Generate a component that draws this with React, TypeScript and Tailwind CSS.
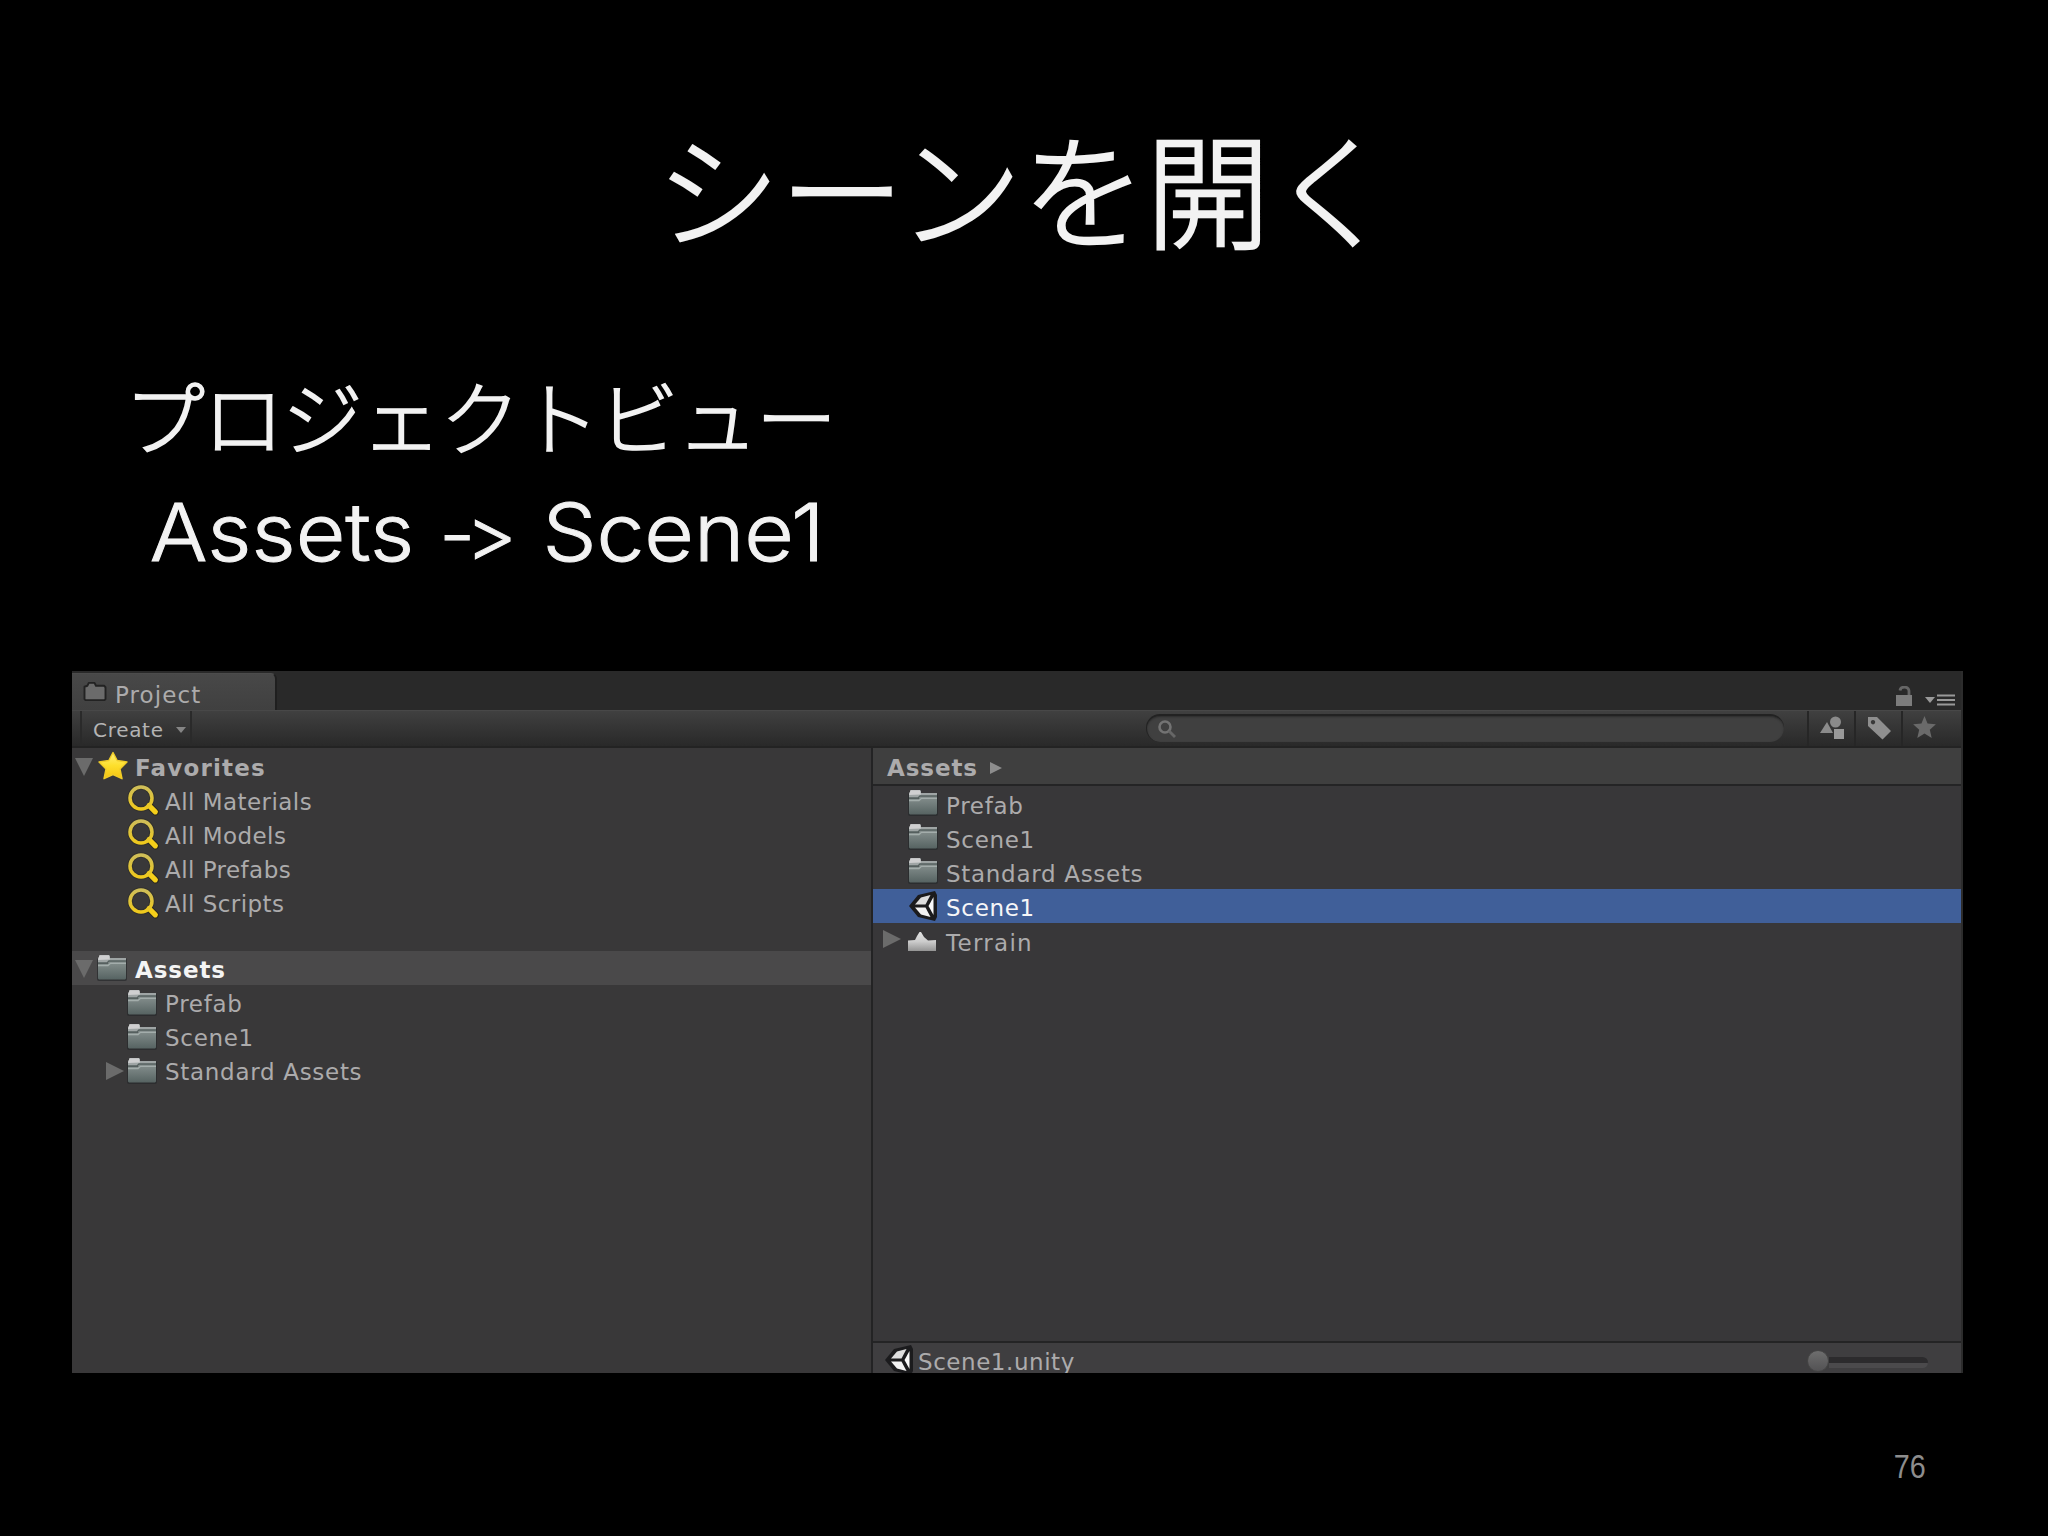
import React from "react";

const ui = "font-['DejaVu_Sans',sans-serif]";

function Folder({ className = "" }: { className?: string }) {
  return (
    <svg viewBox="0 0 32 28" className={`h-[28px] w-[32px] shrink-0 ${className}`}>
      <defs>
        <linearGradient id="folderBody" x1="0" y1="0" x2="0" y2="1">
          <stop offset="0" stopColor="#87918f" />
          <stop offset="1" stopColor="#566362" />
        </linearGradient>
      </defs>
      <rect x="1" y="4" width="30" height="23" rx="2" fill="#262a2b" opacity="0.7" />
      <path d="M2 7V4l1-1V2l1-1h9l1 1v2h16v5H2z" fill="#9fa5a5" />
      <path d="M2 6L3.500 1.200H13l1 4.300z" fill="#cfcfd0" />
      <path d="M2 9.500h10l2-2.500h16v17.500l-1 1H3l-1-1z" fill="url(#folderBody)" />
      <path d="M2 9h9l2-2h17" fill="none" stroke="#55605f" strokeWidth="1.300" />
      <path d="M2 11.500h10l2.500-2.200H30" fill="none" stroke="#a3adab" strokeWidth="1.300" />
    </svg>
  );
}

function Magnifier() {
  return (
    <svg viewBox="0 0 32 32" className="h-[32px] w-[32px] shrink-0">
      <defs>
        <linearGradient id="lens" x1="0" y1="0" x2="0" y2="1">
          <stop offset="0" stopColor="#cfbe58" />
          <stop offset="1" stopColor="#efc91d" />
        </linearGradient>
      </defs>
      <path d="M23 22.500l5.500 5.500" stroke="#2c2a20" strokeWidth="7" strokeLinecap="round" />
      <circle cx="14" cy="14" r="11" fill="none" stroke="#2c2a20" strokeWidth="5.500" opacity="0.5" />
      <path d="M22 21.500l6.300 6.300" stroke="#f5cf1a" strokeWidth="5.200" strokeLinecap="round" />
      <circle cx="14" cy="14" r="11" fill="none" stroke="url(#lens)" strokeWidth="3.500" />
    </svg>
  );
}

function Star() {
  return (
    <svg viewBox="0 0 30 29" className="ml-[5px] h-[29px] w-[30px] shrink-0">
      <defs>
        <linearGradient id="star" x1="0" y1="0" x2="0" y2="1">
          <stop offset="0" stopColor="#fff07a" />
          <stop offset="0.500" stopColor="#fddf2c" />
          <stop offset="1" stopColor="#f5c310" />
        </linearGradient>
      </defs>
      <path
        d="M15 1.500l4.200 8 9.800 1.500-7 7 2 9.700L15 23.500l-9 4.200 2-9.700-7-7 9.800-1.500z"
        fill="url(#star)"
        stroke="#f0cc28"
        strokeWidth="1.400"
        strokeLinejoin="round"
      />
    </svg>
  );
}

function UnityMark() {
  return (
    <svg viewBox="0 0 30 30" className="h-[30px] w-[30px] shrink-0">
      <path d="M1 15L10 4 27 0l2 4v22l-2 4-17-4z" fill="#1b1b1d" />
      <path d="M7 13.500L13 6.500l9.500-2.500-5 9.500z" fill="#dedede" />
      <path d="M7 16.500l6 7 9.500 2.500-5-9.500z" fill="#f2f2f2" />
      <path d="M25.500 6v18l-5-9z" fill="#fafafa" />
    </svg>
  );
}

function TerrainIcon() {
  return (
    <svg viewBox="0 0 30 22" className="h-[22px] w-[30px] shrink-0">
      <defs>
        <linearGradient id="terrain" x1="0" y1="0" x2="0" y2="1">
          <stop offset="0" stopColor="#e2e2e2" />
          <stop offset="0.500" stopColor="#cccccc" />
          <stop offset="1" stopColor="#949494" />
        </linearGradient>
      </defs>
      <path d="M1 21V10.500L8 10l2-4 2.500-4h1.500l3 5 4 3.500 8-.5V21z" fill="url(#terrain)" />
    </svg>
  );
}

function Arrow({ down = false, className = "" }: { down?: boolean; className?: string }) {
  return (
    <svg viewBox="0 0 18 18" className={`size-[18px] shrink-0 ${className}`}>
      <path d={down ? "M0 0h18L9 18z" : "M0 0l18 9L0 18z"} fill="#6b6b6b" />
    </svg>
  );
}

function Label({
  children,
  spacing = "tracking-[0.700px]",
  pad = "pt-[4px]",
  tone = "text-[#acabac]",
  className = "",
}: {
  children: React.ReactNode;
  spacing?: string;
  pad?: string;
  tone?: string;
  className?: string;
}) {
  return <span className={`whitespace-pre text-[23px] leading-[32px] ${spacing} ${pad} ${tone} ${className}`}>{children}</span>;
}

function Tree() {
  return (
    <div className="flex w-[799px] shrink-0 flex-col bg-[#393839]">
      <div className="flex h-[35px] items-center pl-[3px]">
        <Arrow down className="mt-[2px]" />
        <Star />
        <Label className="pl-[7px] font-bold" spacing="tracking-[1.200px]">Favorites</Label>
      </div>
      {["All Materials", "All Models", "All Prefabs", "All Scripts"].map((name) => (
        <div key={name} className="flex h-[34.200px] items-center pl-[55px]">
          <Magnifier />
          <Label className="pl-[6px]" spacing="tracking-[0.450px]" pad="pt-[3px]">{name}</Label>
        </div>
      ))}
      <div className="mt-[31px] flex h-[34.200px] items-center bg-[#4a494a] pl-[3px]">
        <Arrow down className="mt-[2px]" />
        <Folder className="ml-[3px]" />
        <Label className="pl-[7px] font-bold" tone="text-[#f4f4f4]" spacing="tracking-[0.900px]">Assets</Label>
      </div>
      {["Prefab", "Scene1", "Standard Assets"].map((name) => (
        <div key={name} className="flex h-[34.200px] items-center pl-[34px]">
          <Arrow className={name === "Standard Assets" ? "mt-[2px]" : "invisible"} />
          <Folder className="ml-[2px] mt-[1px]" />
          <Label className="pl-[7px]">{name}</Label>
        </div>
      ))}
    </div>
  );
}

function Files() {
  return (
    <div className="flex min-w-0 flex-1 flex-col border-l-[2px] border-[#232324] bg-[#383739]">
      <div className="flex h-[38px] shrink-0 items-center border-b-[2px] border-[#242425] bg-[#3f3f3f] pl-[14px]">
        <Label className="font-bold" pad="pt-[3px]" spacing="tracking-[0.900px]">Assets</Label>
        <svg viewBox="0 0 12 12" className="ml-[12px] mt-[3px] size-[12px]">
          <path d="M0 0l12 6-12 6z" fill="#8d8d8d" />
        </svg>
      </div>
      {["Prefab", "Scene1", "Standard Assets"].map((name) => (
        <div key={name} className="flex h-[34.200px] shrink-0 items-center pl-[34px]">
          <Folder />
          <Label className="pl-[7px]" pad="pt-[5px]">{name}</Label>
        </div>
      ))}
      <div className="flex h-[34.200px] shrink-0 items-center bg-[#405f99] pl-[35px]">
        <UnityMark />
        <Label className="pl-[8px]" pad="pt-[5px]" tone="text-[#f6f6f8]">Scene1</Label>
      </div>
      <div className="flex h-[34.200px] shrink-0 items-center pl-[10px]">
        <Arrow className="-mt-[2px]" />
        <span className="ml-[6px] mt-[3px] flex">
          <TerrainIcon />
        </span>
        <Label className="pl-[9px]" pad="pt-[6px]" spacing="tracking-[1.300px]">Terrain</Label>
      </div>
      <div className="mt-auto flex h-[32px] shrink-0 items-center border-t-[2px] border-[#242425] bg-[#3f3e40] pl-[11px] pr-[33px]">
        <span className="mt-[4px] flex">
          <UnityMark />
        </span>
        <Label className="pl-[4px]" pad="pt-[8px]" spacing="tracking-[0.550px]">Scene1.unity</Label>
        <div className="ml-auto mt-[5px] flex items-center">
          <span className="size-[22px] rounded-full border border-[#444] bg-linear-to-b from-[#6e6e6e] to-[#535254]" />
          <span className="mt-[3px] h-[11px] w-[99px] rounded-r-full border-b-[5px] border-[#4b4a4c] bg-[#2c2b2d]" />
        </div>
      </div>
    </div>
  );
}

function TabBar() {
  return (
    <div className="flex h-[38.500px] shrink-0 items-end bg-[#292929]">
      <div className="flex h-[37px] w-[205px] items-center rounded-tr-[6px] border-r-[2px] border-t border-[#4c4c4c] border-r-[#1f1f1f] bg-linear-to-b from-[#484848] to-[#404040] pl-[10px]">
        <svg viewBox="0 0 26 22" className="-mt-[1px] h-[21px] w-[26px]">
          <path
            d="M2 19V6l3-1 1.500-3h6L14 5h8.500L24 6.500V19l-1 1H3z"
            fill="#6b6b6b"
            stroke="#222"
            strokeWidth="2"
            strokeLinejoin="round"
          />
        </svg>
        <Label className="pl-[7px]" pad="pt-[6px]" spacing="tracking-[1.100px]">Project</Label>
      </div>
      <div className="ml-auto flex h-full items-end pb-[4px] pr-[6px]">
        <svg viewBox="0 0 16 20" className="h-[20px] w-[16px]">
          <path d="M4 4.500C4.500 0 12.500 0 13 5v5" fill="none" stroke="#666" strokeWidth="2.800" />
          <rect x="0" y="9" width="16" height="11" fill="#7c7c7c" />
        </svg>
        <svg viewBox="0 0 30 12" className="ml-[13px] h-[12px] w-[30px]">
          <path d="M0 3h10L5 9z" fill="#999" />
          <path d="M12 1.500h18M12 6h18M12 10.500h18" stroke="#999" strokeWidth="2.200" />
        </svg>
      </div>
    </div>
  );
}

function ToolBar() {
  return (
    <div className="flex h-[38.500px] shrink-0 items-stretch border-b-[2px] border-t border-b-[#232323] border-t-[#484848] bg-linear-to-b from-[#404040] to-[#292929]">
      <div className="ml-[8px] flex w-[112px] items-center border-x-[2px] border-[#2a2a2a] pl-[11px]">
        <span className="pt-[3px] text-[20px] leading-[28px] tracking-[0.700px] text-[#b4b4b4]">Create</span>
        <svg viewBox="0 0 10 6" className="ml-[12px] mt-[3px] h-[6px] w-[10px]">
          <path d="M0 0h10L5 6z" fill="#858585" />
        </svg>
      </div>
      <div className="ml-auto mr-[23px] mt-[3px] flex h-[28px] w-[638px] items-center rounded-full border-t-[2px] border-l border-[#222] bg-[#404040] pl-[11px] shadow-[inset_0_1px_2px_#2c2c2c]">
        <svg viewBox="0 0 18 18" className="size-[18px]">
          <circle cx="7" cy="7" r="5.500" fill="none" stroke="#737373" strokeWidth="2.600" />
          <path d="M11 11l6 6" stroke="#666" strokeWidth="2.800" />
        </svg>
      </div>
      <div className="flex w-[47px] items-center justify-center border-l-[2px] border-[#262626]">
        <svg viewBox="0 0 24 24" className="size-[24px]">
          <path d="M0 17L7 6l6 11z" fill="#8b8b8b" />
          <circle cx="15.500" cy="6" r="5.500" fill="#8b8b8b" />
          <rect x="14" y="13" width="10" height="10" fill="#9a9a9a" />
        </svg>
      </div>
      <div className="flex w-[47px] items-center justify-center border-l-[2px] border-[#262626]">
        <svg viewBox="0 0 24 24" className="size-[24px]">
          <path fillRule="evenodd" d="M1 1h9l14 14-8.500 8.500L1 10zM6 4a2.200 2.200 0 1 0 .01 0z" fill="#8f8f8f" />
        </svg>
      </div>
      <div className="flex w-[60px] items-center border-l-[2px] border-[#262626] pl-[10px]">
        <svg viewBox="0 0 30 29" className="-mt-[2px] h-[22px] w-[23px]">
          <path d="M15 0l4 10 11 1-8 7 2.500 11L15 23l-9.500 6L8 18l-8-7 11-1z" fill="#6a6a6a" />
        </svg>
      </div>
    </div>
  );
}

export default function App() {
  return (
    <main className="flex h-[1536px] w-[2048px] flex-col overflow-hidden bg-black font-['Noto_Sans_CJK_JP',sans-serif] text-[#f2f2f2]">
      <h1 className="mt-[97px] flex h-[176px] items-center justify-center whitespace-nowrap pl-[2px] text-[124px] font-light leading-[176px] [-webkit-text-stroke:2.400px_#f2f2f2]">
        シーンを開く
      </h1>
      <div className="mt-[83px] flex h-[315px] flex-col pl-[124px] text-[81px] font-light leading-[115px] [-webkit-text-stroke:1.600px_#f2f2f2]">
        <p className="whitespace-nowrap tracking-[-2px]">プロジェクトビュー</p>
        <p className="origin-left scale-x-[1.07] self-start whitespace-pre pl-[24px] pt-[3px] font-['Inter',sans-serif] text-[80px] [-webkit-text-stroke:1px_#f2f2f2] [font-feature-settings:'calt'_0]">
          <span>Assets </span>
          <span className="mx-[1px] text-[74px]">
            <span className="tracking-[-9px]">-</span>&gt;
          </span>
          <span> Scene1</span>
        </p>
      </div>
      <section className={`ml-[72px] flex h-[702px] w-[1891px] shrink-0 flex-col overflow-hidden border-r-[2px] border-[#2c2c2c] ${ui}`}>
        <TabBar />
        <ToolBar />
        <div className="flex min-h-0 flex-1">
          <Tree />
          <Files />
        </div>
      </section>
      <footer className="mt-[70px] flex justify-end pr-[122px] font-['Liberation_Sans',sans-serif]">
        <span className="origin-right scale-x-[0.87] text-[33px] leading-[48px] text-[#8d8d8d]">76</span>
      </footer>
    </main>
  );
}
